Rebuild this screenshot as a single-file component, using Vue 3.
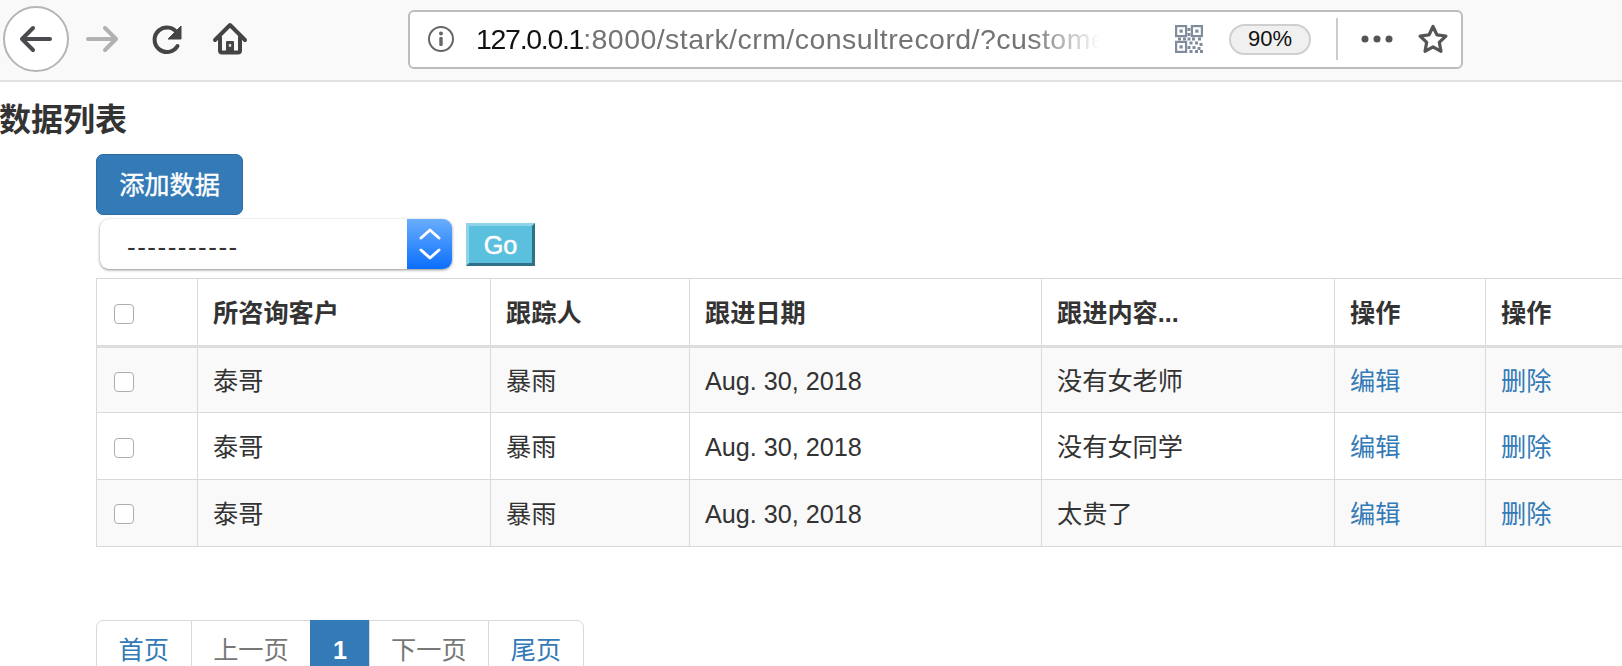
<script setup>
const rows = [
  { customer: '泰哥', tracker: '暴雨', date: 'Aug. 30, 2018', note: '没有女老师' },
  { customer: '泰哥', tracker: '暴雨', date: 'Aug. 30, 2018', note: '没有女同学' },
  { customer: '泰哥', tracker: '暴雨', date: 'Aug. 30, 2018', note: '太贵了' },
]
</script>

<template>
  <div class="page">
    <header class="toolbar">
      <button class="back" aria-label="后退">
        <svg width="36" height="30" viewBox="0 0 36 30"><path d="M32 15H5M15 4L4 15l11 11" fill="none" stroke="#4a4a4f" stroke-width="4" stroke-linecap="round" stroke-linejoin="round"/></svg>
      </button>
      <svg class="fwd" width="36" height="30" viewBox="0 0 36 30"><path d="M4 15h27M21 4l11 11-11 11" fill="none" stroke="#b1b1b3" stroke-width="4" stroke-linecap="round" stroke-linejoin="round"/></svg>
      <svg class="reload" width="36" height="36" viewBox="0 0 36 36"><path d="M28.500 12.500A12.300 12.300 0 1 0 28.500 25" fill="none" stroke="#444" stroke-width="4" stroke-linecap="round"/><path d="M32 5v13H19z" fill="#444" stroke="#444" stroke-linejoin="round"/></svg>
      <svg class="home" width="36" height="36" viewBox="0 0 36 36"><path d="M3 19L18 4l15 15M8 16v13.500a2 2 0 0 0 2 2h16a2 2 0 0 0 2-2V16" fill="none" stroke="#444" stroke-width="4" stroke-linecap="round" stroke-linejoin="round"/><rect x="14" y="20" width="8" height="11" rx="1" fill="#444"/><rect x="16.800" y="23" width="2.400" height="2.800" fill="#ddd"/></svg>
      <div class="url">
        <svg class="info" width="28" height="28" viewBox="0 0 28 28"><circle cx="14" cy="14" r="12" fill="none" stroke="#666" stroke-width="2"/><circle cx="14" cy="8.500" r="2" fill="#666"/><rect x="12.300" y="12" width="3.400" height="9" rx="1" fill="#666"/></svg>
        <div class="address"><span class="host">127.0.0.1</span>:8000/stark/crm/consultrecord/?custome</div>
        <svg class="qr" width="28" height="28" viewBox="0 0 28 28">
          <g fill="none" stroke="#808b9c" stroke-width="2.200">
            <rect x="1.100" y="1.100" width="10" height="10"/><rect x="16.900" y="1.100" width="10" height="10"/><rect x="1.100" y="16.900" width="10" height="10"/>
          </g>
          <g fill="#808b9c">
            <rect x="4.500" y="4.500" width="3.200" height="3.200"/><rect x="20.300" y="4.500" width="3.200" height="3.200"/><rect x="4.500" y="20.300" width="3.200" height="3.200"/>
            <rect x="12.500" y="3" width="3" height="3"/><rect x="12.500" y="8" width="3" height="3"/><rect x="12.500" y="12.500" width="3" height="3"/><rect x="3" y="12.500" width="3" height="3"/><rect x="8" y="12.500" width="3" height="3"/><rect x="17" y="12.500" width="3" height="3"/><rect x="23" y="12.500" width="3" height="3"/>
            <rect x="14.500" y="16.500" width="3" height="3"/><rect x="20" y="16.500" width="3" height="3"/><rect x="24.500" y="18" width="3" height="3"/><rect x="12.500" y="21" width="3" height="3"/><rect x="17.500" y="21" width="3" height="3"/><rect x="22.500" y="22" width="3" height="3"/><rect x="14.500" y="25" width="3" height="3"/><rect x="20" y="25" width="3" height="3"/><rect x="25" y="25" width="3" height="3"/>
          </g>
        </svg>
        <span class="zoom">90%</span>
        <i class="sep"></i>
        <svg class="dots" width="32" height="8" viewBox="0 0 32 8"><circle cx="4" cy="4" r="3.500" fill="#555"/><circle cx="16" cy="4" r="3.500" fill="#555"/><circle cx="28" cy="4" r="3.500" fill="#555"/></svg>
        <svg class="star" width="32" height="32" viewBox="0 0 32 32"><path d="M16 3.500l3.900 8.300 9 1.200-6.600 6.300 1.700 9L16 23.900l-8 4.400 1.700-9L3.100 13l9-1.200z" fill="none" stroke="#555" stroke-width="3.200" stroke-linejoin="round"/></svg>
      </div>
    </header>

    <main class="content">
      <h3 class="title">数据列表</h3>
      <div class="body">
        <a class="add" href="#" @click.prevent>添加数据</a>
        <form class="actions" @submit.prevent>
          <div class="select">
            <span class="select-text">-----------</span>
            <span class="select-arrow">
              <svg width="24" height="36" viewBox="0 0 24 36"><path d="M3 12l9-8 9 8M3 24l9 8 9-8" fill="none" stroke="#fff" stroke-width="3" stroke-linecap="round" stroke-linejoin="round"/></svg>
            </span>
          </div>
          <button class="go" type="submit">Go</button>
        </form>
        <table class="grid">
          <colgroup>
            <col class="c1" /><col class="c2" /><col class="c3" /><col class="c4" /><col class="c5" /><col class="c6" /><col class="c7" />
          </colgroup>
          <thead>
            <tr>
              <th><input type="checkbox" class="check" /></th>
              <th>所咨询客户</th>
              <th>跟踪人</th>
              <th>跟进日期</th>
              <th>跟进内容...</th>
              <th>操作</th>
              <th>操作</th>
            </tr>
          </thead>
          <tbody>
            <tr v-for="(row, i) in rows" :key="i">
              <td><input type="checkbox" class="check" /></td>
              <td>{{ row.customer }}</td>
              <td>{{ row.tracker }}</td>
              <td>{{ row.date }}</td>
              <td>{{ row.note }}</td>
              <td><a href="#" @click.prevent>编辑</a></td>
              <td><a href="#" @click.prevent>删除</a></td>
            </tr>
          </tbody>
        </table>
        <nav class="pager">
          <a href="#" @click.prevent>首页</a>
          <span>上一页</span>
          <span class="active">1</span>
          <span>下一页</span>
          <a href="#" @click.prevent>尾页</a>
        </nav>
      </div>
    </main>
  </div>
</template>

<style>
html, body { margin: 0; background: #fff; overflow: hidden; }
</style>

<style scoped>
.page {
  width: 1622px;
  height: 666px;
  overflow: hidden;
  font-family: "Liberation Sans", "Noto Sans CJK SC", sans-serif;
  color: #333;
  background: #fff;
}
.toolbar {
  box-sizing: border-box;
  height: 82px;
  display: flex;
  align-items: center;
  padding: 0 0 2px 3px;
  background: #f9f9fa;
  border-bottom: 2px solid #e1e1e2;
}
.back {
  box-sizing: border-box;
  width: 66px;
  height: 66px;
  padding: 0;
  display: flex;
  align-items: center;
  justify-content: center;
  background: #fff;
  border: 2px solid #b5b5b6;
  border-radius: 50%;
}
.fwd { margin-left: 15px; }
.reload { margin-left: 29px; }
.home { margin-left: 27px; }
.url {
  box-sizing: border-box;
  width: 1055px;
  height: 59px;
  margin-left: 160px;
  display: flex;
  align-items: center;
  padding-left: 17px;
  background: #fff;
  border: 2px solid #bdbdbe;
  border-radius: 6px;
}
.address {
  width: 630px;
  margin-left: 21px;
  overflow: hidden;
  white-space: nowrap;
  font-size: 28.500px;
  letter-spacing: 0.450px;
  color: #737373;
  -webkit-mask-image: linear-gradient(to right, #000 88%, transparent 99%);
  mask-image: linear-gradient(to right, #000 88%, transparent 99%);
}
.host { color: #111; letter-spacing: -1.300px; }
.qr { margin-left: 69px; }
.zoom {
  box-sizing: border-box;
  width: 82px;
  height: 31px;
  margin-left: 26px;
  display: flex;
  align-items: center;
  justify-content: center;
  font-size: 22px;
  color: #111;
  background: #f0f0f0;
  border: 2px solid #cfcfcf;
  border-radius: 16px;
}
.sep {
  width: 2px;
  height: 42px;
  margin-left: 25px;
  background: #ccc;
}
.dots { margin-left: 23px; }
.star { margin-left: 24px; }

.title {
  margin: 0 0 0 -1px;
  padding-top: 19px;
  height: 47px;
  box-sizing: content-box;
  font-size: 32px;
  line-height: 38px;
  font-weight: 700;
  color: #333;
}
.body { padding-left: 96px; }
.add {
  display: block;
  box-sizing: border-box;
  width: 147px;
  height: 61px;
  margin-top: 6px;
  line-height: 61px;
  text-align: center;
  font-size: 25.200px;
  font-weight: 400;
  -webkit-text-stroke: 0.400px #fff;
  color: #fff;
  text-decoration: none;
  background: #337ab7;
  border: 1px solid #2e6da4;
  border-radius: 7px;
}
.actions {
  display: flex;
  align-items: center;
  height: 50px;
  margin-top: 4px;
  padding-left: 4px;
}
.select {
  box-sizing: border-box;
  width: 352px;
  height: 50px;
  display: flex;
  background: #fff;
  border-radius: 9px;
  box-shadow: 0 1px 3px rgba(0, 0, 0, .45);
  overflow: hidden;
}
.select-text {
  flex: 1;
  padding-left: 27px;
  font-size: 26px;
  letter-spacing: 1.500px;
  line-height: 56px;
  color: #333;
}
.select-arrow {
  width: 45px;
  display: flex;
  align-items: center;
  justify-content: center;
  background: linear-gradient(#6aaefc, #0a6ffd);
}
.go {
  box-sizing: border-box;
  width: 69px;
  height: 43px;
  margin-left: 14px;
  padding: 3px 0 0;
  font-family: inherit;
  font-size: 25.200px;
  -webkit-text-stroke: 0.500px #fff;
  color: #fff;
  background: #5bc0de;
  border-width: 3px;
  border-style: solid;
  border-color: #8ed3e8 #2f7287 #2f7287 #8ed3e8;
}
.grid {
  width: 1560px;
  margin-top: 9px;
  table-layout: fixed;
  border-collapse: collapse;
  font-size: 25.200px;
  line-height: 36px;
}
.c1 { width: 101px; }
.c2 { width: 293px; }
.c3 { width: 199px; }
.c4 { width: 352px; }
.c5 { width: 293px; }
.c6 { width: 151px; }
.c7 { width: 171px; }
.grid th, .grid td {
  box-sizing: border-box;
  height: 66.400px;
  padding: 2px 14.400px 0 15px;
  text-align: left;
  vertical-align: middle;
  border: 1px solid #d9d9d9;
  white-space: nowrap;
}
.grid tbody tr:last-child td { height: 67.400px; }
.grid th { height: 68px; border-bottom: 3px solid #ddd; font-weight: 700; }
.grid tbody tr:nth-child(odd) { background: #f9f9f9; }
.grid a { color: #337ab7; text-decoration: none; }
.grid th:nth-child(7), .grid td:nth-child(7) { border-right: none; }
.check {
  appearance: none;
  -webkit-appearance: none;
  display: block;
  box-sizing: border-box;
  width: 20px;
  height: 20px;
  margin: 1px 0 0 2px;
  background: #fff;
  border: 1.500px solid #adadad;
  border-radius: 4px;
}
.pager {
  display: flex;
  width: max-content;
  margin-top: 73px;
  font-size: 25.200px;
  line-height: 36px;
}
.pager > * {
  padding: 10.800px 21.600px;
  background: #fff;
  border: 1px solid #d9d9d9;
  margin-left: -1px;
  text-decoration: none;
  color: #777;
}
.pager > a { color: #337ab7; }
.pager > :first-child { margin-left: 0; border-top-left-radius: 7px; }
.pager > :last-child { border-top-right-radius: 7px; }
.pager > .active {
  color: #fff;
  font-weight: 700;
  background: #337ab7;
  border-color: #337ab7;
}
</style>
